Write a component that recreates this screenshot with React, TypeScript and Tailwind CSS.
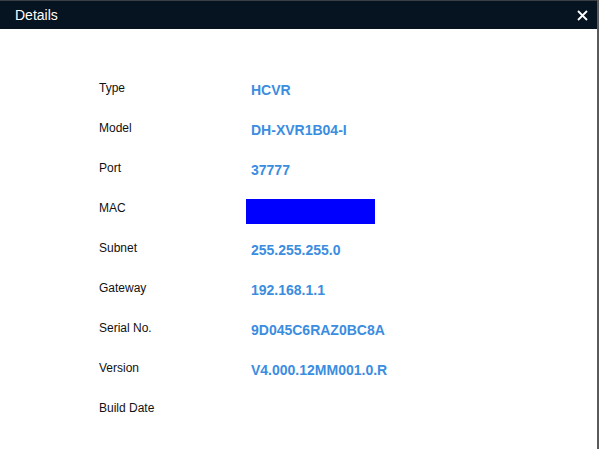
const rows: { label: string; value?: string; masked?: boolean }[] = [
    { label: 'Type', value: 'HCVR' },
    { label: 'Model', value: 'DH-XVR1B04-I' },
    { label: 'Port', value: '37777' },
    { label: 'MAC', masked: true },
    { label: 'Subnet', value: '255.255.255.0' },
    { label: 'Gateway', value: '192.168.1.1' },
    { label: 'Serial No.', value: '9D045C6RAZ0BC8A' },
    { label: 'Version', value: 'V4.000.12MM001.0.R' },
    { label: 'Build Date', value: '' },
];

export default function App() {
    return (
        <div className="w-[599px] h-[449px] flex flex-col bg-white border-r-2 border-[#5a5a5a] font-['Liberation_Sans',Arial,sans-serif] overflow-hidden">
            {/* Title bar */}
            <div className="h-[29px] shrink-0 flex items-center justify-between bg-[#061321] border-t border-[#3a3f45] pl-[15px] pr-[8px]">
                <span className="text-white text-[14px]">Details</span>
                <svg width="11" height="11" viewBox="0 0 11 11" className="mr-[1px]">
                    <path d="M1 1 L10 10 M10 1 L1 10" stroke="white" strokeWidth="1.8" />
                </svg>
            </div>

            {/* Info rows */}
            <div className="flex flex-col pt-[48px] pl-[99px]">
                {rows.map((row) => (
                    <div key={row.label} className="h-[40px] flex items-start">
                        <span className="w-[152px] text-[12px] leading-[22px] text-[#111]">{row.label}</span>
                        {row.masked ? (
                            <div className="w-[129px] h-[25px] bg-[#0000ff] -ml-[5px] mt-[2px]" />
                        ) : (
                            <span className="text-[14px] font-bold leading-[26px] text-[#3b8de0]">{row.value}</span>
                        )}
                    </div>
                ))}
            </div>
        </div>
    );
}
